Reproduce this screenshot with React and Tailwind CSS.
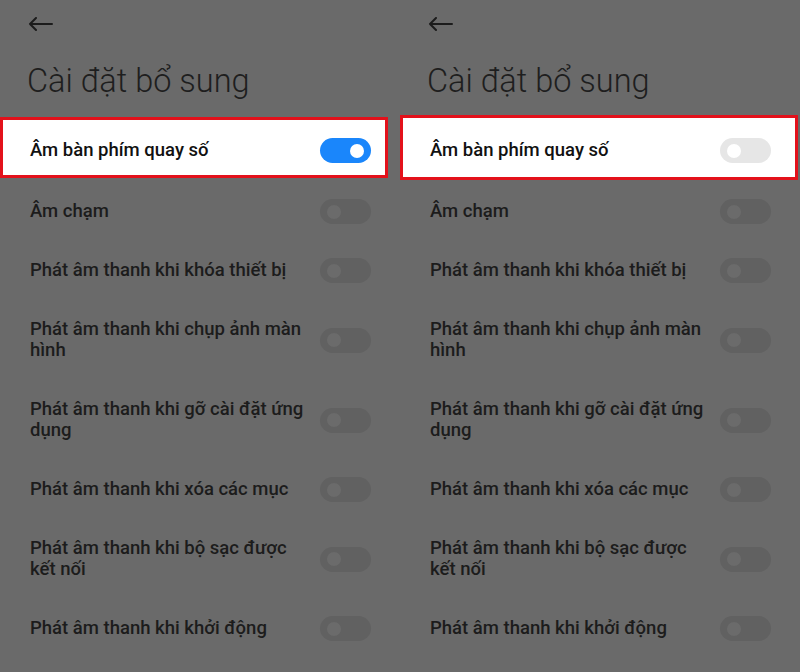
import React from "react";

const rows = [
  ["Âm chạm"],
  ["Phát âm thanh khi khóa thiết bị"],
  ["Phát âm thanh khi chụp ảnh màn", "hình"],
  ["Phát âm thanh khi gỡ cài đặt ứng", "dụng"],
  ["Phát âm thanh khi xóa các mục"],
  ["Phát âm thanh khi bộ sạc được", "kết nối"],
  ["Phát âm thanh khi khởi động"],
];

const Toggle = ({ variant }) => {
  if (variant === "on") {
    return (
      <div className="flex h-[25px] w-[51px] shrink-0 items-center justify-end rounded-full bg-[#1a86fb] pr-[7px]">
        <div className="h-[14px] w-[14px] rounded-full bg-white" />
      </div>
    );
  }
  if (variant === "off") {
    return (
      <div className="flex h-[25px] w-[51px] shrink-0 items-center rounded-full bg-[#e6e6e6] pl-[7px]">
        <div className="h-[14px] w-[14px] rounded-full bg-white" />
      </div>
    );
  }
  return (
    <div className="flex h-[25px] w-[51px] shrink-0 items-center rounded-full bg-[#616161] pl-[7px]">
      <div className="h-[14px] w-[14px] rounded-full bg-[#6b6b6b]" />
    </div>
  );
};

const Panel = ({ on, boxClass, headClass }) => (
  <div className="flex w-[400px] flex-col">
    <div className={`flex flex-col ${headClass}`}>
      <div className="pl-[28px] pt-[17px]">
        <svg width="25" height="14" viewBox="0 0 25 14" fill="none">
          <path
            d="M24 7H2M8 1L2 7l6 6"
            stroke="#1c1c1c"
            strokeWidth="2"
            strokeLinecap="round"
            strokeLinejoin="round"
          />
        </svg>
      </div>
      <h1 className="mt-[30px] pl-[27px] text-[32.5px] leading-[40px] font-light text-[#1e1e1e]">
        Cài đặt bổ sung
      </h1>
    </div>

    <div
      className={`flex items-center border-[3px] border-[#e3111b] bg-white pl-[27px] pt-[6px] ${boxClass}`}
    >
      <span className="flex-1 text-[18.5px] leading-[21px] font-medium text-[#111]">
        Âm bàn phím quay số
      </span>
      <Toggle variant={on ? "on" : "off"} />
    </div>

    {rows.map((lines) => (
      <div
        key={lines[0]}
        className="flex items-center py-[17px] pl-[30px] pr-[29px]"
      >
        <div className="flex flex-1 flex-col py-[2px] text-[18.5px] leading-[21px] font-medium text-[#1c1c1c]">
          {lines.map((l) => (
            <span key={l}>{l}</span>
          ))}
        </div>
        <Toggle variant="dim" />
      </div>
    ))}
  </div>
);

export default function App() {
  return (
    <div
      className="flex h-[672px] w-[800px] overflow-hidden bg-[#6a6a6a]"
      style={{ fontFamily: "Roboto, 'Noto Sans', sans-serif" }}
    >
      <Panel
        on
        headClass="h-[117px]"
        boxClass="mb-[4px] mr-[12px] h-[61px] pr-[14px]"
      />
      <Panel
        on={false}
        headClass="h-[115px]"
        boxClass="mb-[2px] mr-[2px] h-[65px] pr-[24px]"
      />
    </div>
  );
}
